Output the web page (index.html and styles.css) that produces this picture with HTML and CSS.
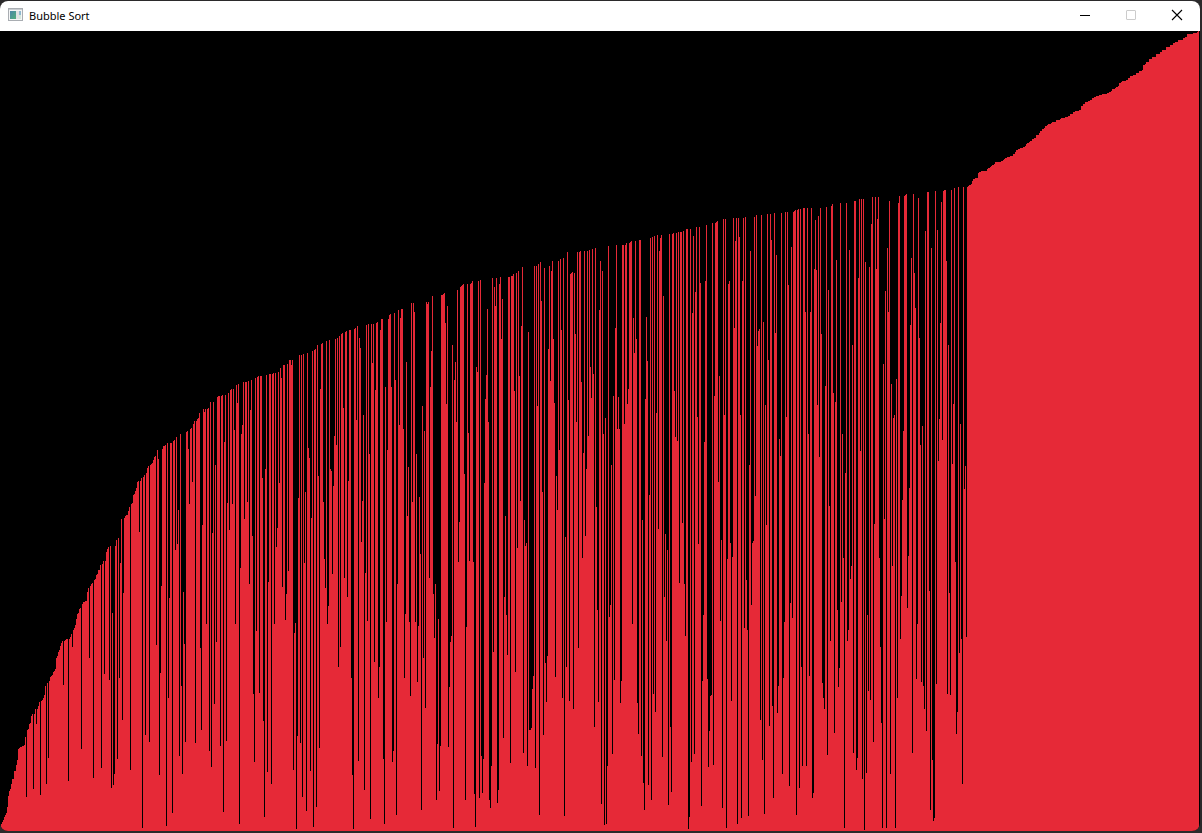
FILE: index.html
```html
<!DOCTYPE html>
<html lang="en">
<head>
<meta charset="utf-8">
<title>Bubble Sort</title>
<link rel="stylesheet" href="styles.css">
</head>
<body>
<main class="window">
  <header class="titlebar">
    <svg class="app-icon" viewBox="0 0 16 16" aria-hidden="true">
      <defs>
        <linearGradient id="pane" x1="0" y1="0" x2="1" y2="1">
          <stop offset="0" stop-color="#4a86a8"/>
          <stop offset="1" stop-color="#4fae7c"/>
        </linearGradient>
      </defs>
      <rect x="0.5" y="0.5" width="14" height="12" fill="#f4f5f6" stroke="#a9adb2"/>
      <path d="M1 1.5H14" stroke="#c9cdd1"/>
      <rect x="2" y="3" width="6" height="8" fill="url(#pane)"/>
      <rect x="8" y="3" width="3" height="8" fill="#dfe2e4"/>
      <rect x="11" y="3" width="2" height="4" fill="#8fb8cf"/>
      <rect x="11" y="7" width="2" height="4" fill="#d3e8dc"/>
    </svg>
    <h1 class="title">Bubble Sort</h1>
    <button class="control" type="button" aria-label="Minimize">
      <svg class="glyph" viewBox="0 0 10 10"><path d="M0 5.5H10" stroke="#000"/></svg>
    </button>
    <button class="control" type="button" aria-label="Maximize" disabled>
      <svg class="glyph" viewBox="0 0 10 10"><rect x="0.5" y="0.5" width="9" height="9" rx="0.5" fill="none" stroke="#ccc"/></svg>
    </button>
    <button class="control" type="button" aria-label="Close">
      <svg class="glyph" viewBox="0 0 10 10"><path d="M0 0L10 10M10 0L0 10" stroke="#000" stroke-width="1.1"/></svg>
    </button>
  </header>
  <svg class="chart" viewBox="0 0 1200 800" preserveAspectRatio="none" role="img" aria-label="Bars being sorted">
    <path class="bars" id="bars"/>
  </svg>
</main>
<script src="bars.js"></script>
</body>
</html>
```

FILE: styles.css
```css
* {
  box-sizing: border-box;
}

body {
  margin: 0;
  height: 100vh;
  padding: 1px 2px 2px 0;
  background: #2b2a2b;
}

.window {
  display: flex;
  flex-direction: column;
  height: 100%;
  overflow: hidden;
  border-radius: 8px;
  background: #000;
}

.titlebar {
  display: flex;
  flex: none;
  align-items: center;
  height: 30px;
  padding-left: 8px;
  background: #fff;
}

.app-icon {
  width: 16px;
  height: 16px;
  margin-right: 5px;
}

.title {
  flex: 1;
  margin: 0;
  font: 400 11px/16px "Noto Sans", "Open Sans", sans-serif;
  color: #000;
}

.control {
  display: flex;
  align-items: center;
  justify-content: center;
  width: 46px;
  height: 30px;
  padding: 0 0 2px;
  border: 0;
  background: none;
}

.glyph {
  width: 10px;
  height: 10px;
  overflow: visible;
}

.chart {
  flex: 1;
  display: block;
  width: 100%;
  min-height: 0;
}

.bars {
  fill: #e62937;
  shape-rendering: crispEdges;
}
```

FILE: bars.js
```js
// Each run lists the tops of consecutive one-unit bars, ten to a row.
// A top is offset + value / scale, measured down from the chart's upper edge.
const runs = [
  { offset: 349, scale: 3, tops: [
    1350,1333,1327,1320,1311,1305,1299,1281,1248,1233,
    1227,1212,1197,1197,1173,1173,1155,1140,1107,1104,
    1101,1101,1098,1098,1095,1071,1251,1050,1047,1032,
    1029,1008,1002,1227,1002,987,1032,987,978,966,
    1245,963,960,954,945,918,1212,909,1134,903,
    891,888,885,876,873,867,834,828,816,810,
    798,789,783,915,783,780,777,777,1203,777,
    771,762,801,750,744,735,717,702,699,687,
    684,1107,672,666,666,663,663,636,624,834,
    618,612,609,1194,600,597,585,582,570,570,
    555,1164,552,543,882,543,516,507,501,900,
    498,1224,699,1215,1182,498,480,1137,474,894,
    549,417,1020,639,414,408,405,405,393,381,
    1170,372,369,345,342,333,324,306,303,456,
    303,294,1344,291,285,1065,279,264,258,1086,
    255,252,249,240,231,228,795,210,237,1185,
    879,618,207,198,198,195,1338,189,954,654,
    189,189,1299,183,180,510,171,492,390,1128,
    162,918,1182,636,792,1086,156,153,207,372,
    147,144,306,132,123,1089,123,117,114,99,
    804,1050,435,87,96,87,732,87,84,1113,
    66,1161,459,66,972,255,786,51,48,48,
    1098,48,45,1296,186,45,1083,369,39,450,
    30,27,372,27,150,732,15,69,12,1332
  ] },
  { offset: 299, scale: 3, tops: [
    714,312,285,156,567,156,156,516,153,762,
    240,150,618,1092,1296,144,903,141,138,1089,
    138,138,444,1173,1461,417,135,1326,756,132,
    132,1362,132,129,882,129,651,594,126,459,
    114,144,771,105,105,870,792,102,723,90,
    90,105,90,1320,909,879,1497,1218,504,75,
    1239,75,1401,72,699,486,1443,69,354,384,
    1323,564,63,1491,60,57,1431,45,438,1254,
    177,42,39,516,687,774,33,882,828,30,
    417,423,732,468,318,27,345,24,1011,18,
    951,12,9,234,744,6,3,801,453,0,
    0,1044,1335,1497,-3,-6,270,-12,1293,24,
    54,636,513,255,1380,729,-15,873,-18,372,
    1467,-18,99,-18,996,180,-21,-24,1104,1011,
    0,-33,-33,1287,1482,171,876,360,-33,-45,
    -48,171,1296,1263,-51,150,1455,762,-60,285,
    -36,-63,-63,297,1044,852,96,558,411,876,
    1098,-81,516,-81,-54,876,372,1056,888,501,
    672,1440,228,984,303,1134,-84,-78,-84,744,
    171,63,-102,792,924,762,1410,1242,867,1383,
    1248,-105,-105,-108,-111,-21,222,-72,1251,1071,
    936,918,45,1494,150,96,276,-120,696,576,
    -129,-132,-135,-138,432,1410,891,-138,309,693,
    -138,-141,-147,696,1392,1491,111,126,-147,1404
  ] },
  { offset: 199, scale: 2.6, tops: [
    130,1368,1464,1376,658,439,377,205,499,1482,
    1503,1394,125,1097,148,198,125,1490,1456,140,
    122,283,179,1321,954,744,1001,1105,122,122,
    1386,120,120,114,419,1149,112,827,107,380,
    705,250,96,1360,754,822,814,1394,265,1300,
    1300,1295,1194,1160,94,1399,94,458,88,1521,
    83,185,681,1313,99,1126,1227,1108,309,94,
    393,107,81,283,450,1162,640,728,81,572,
    75,260,1217,73,1524,798,1136,57,442,1225,
    114,112,109,1246,112,270,499,57,1087,57,
    55,395,853,580,55,796,621,55,536,52,
    356,437,49,374,1292,47,720,988,1227,208,
    81,1493,107,530,1547,489,1545,1394,42,1006,
    975,611,1363,432,1170,255,39,517,434,517,
    1230,1173,39,39,504,39,34,452,413,34,
    31,29,1025,229,320,29,283,1230,1311,26,
    26,1368,754,1438,1508,439,226,341,1443,689,
    21,1482,18,1207,16,1253,476,13,777,55,
    21,13,1370,172,954,791,1069,832,1495,10,
    1292,1461,10,8,419,538,8,549,5,918,
    5,5,762,3,921,1056,-3,-3,1558,1526,
    -3,1383,216,16,1363,161,-8,486,817,-8,
    138,1498,1173,1001,551,133,-13,1168,1396,1303,
    1212,1209,-18,1391,432,-18,-21,-23,655,380
  ] },
  { offset: 149, scale: 2.4, tops: [
    1059,864,1508,94,564,94,1554,910,250,243,
    872,1251,905,91,355,146,91,1546,91,137,
    564,1532,243,91,1076,89,960,1081,1527,684,
    170,1021,872,867,89,759,84,399,363,358,
    1297,84,1393,341,1522,540,828,82,432,1311,
    82,144,1263,1484,79,367,180,1280,1215,622,
    663,79,1426,1196,1061,77,569,77,252,1455,
    1016,161,1052,77,74,72,1525,72,70,1458,
    70,1169,1407,67,67,317,1407,67,610,1191,
    317,67,1484,1470,214,96,216,540,86,665,
    67,370,1208,1244,1270,495,65,1381,264,783,
    1107,62,58,511,1328,533,192,1033,1217,1172,
    55,1013,610,908,1556,704,55,1107,1081,168,
    958,927,396,1374,50,50,1417,1388,235,46,
    651,46,1438,46,1561,197,1422,1045,1227,209,
    1249,106,41,1349,826,41,214,94,41,908,
    1121,1304,1554,442,814,267,1554,163,317,50,
    1426,490,927,571,564,1556,478,1244,55,38,
    1102,999,768,603,38,36,34,1028,903,740,
    348,187,1374,34,223,307,1198,1066,43,379,
    636,1205,591,1215,1270,122,1323,29,29,987,
    1513,163,1393,1539,1532,26,1210,120,675,574,
    343,53,624,26,24,24,194,1234,396,992,
    1237,24,682,538,19,917,1330,1277,17,1136,
    586,1102,1450,17,742,687,1097
  ] }
];

// Bars already in order: [first column, top * 3]; each level lasts until the next.
const sorted = [
  [967,471],[968,468],[969,465],[971,462],[972,453],[973,447],[975,444],[978,429],
  [979,426],[981,423],[987,417],[988,414],[990,411],[991,408],[992,405],[994,402],
  [995,396],[1001,393],[1003,390],[1004,387],[1005,384],[1007,381],[1010,378],[1013,372],
  [1015,366],[1016,360],[1018,357],[1020,354],[1023,351],[1025,348],[1026,342],[1027,339],
  [1029,336],[1030,333],[1032,327],[1034,324],[1036,315],[1039,309],[1040,303],[1042,297],
  [1044,294],[1045,288],[1047,285],[1048,282],[1051,279],[1052,276],[1056,270],[1060,267],
  [1061,264],[1065,261],[1068,258],[1070,252],[1073,246],[1075,243],[1079,240],[1081,229],
  [1083,222],[1085,216],[1088,213],[1090,210],[1092,204],[1094,201],[1096,198],[1099,195],
  [1102,192],[1107,189],[1109,186],[1111,183],[1112,178],[1115,175],[1116,170],[1118,167],
  [1119,160],[1121,156],[1122,153],[1126,150],[1128,144],[1130,138],[1133,135],[1136,130],
  [1139,123],[1142,120],[1143,106],[1145,101],[1146,95],[1149,87],[1152,81],[1156,73],
  [1160,67],[1162,60],[1166,52],[1170,46],[1173,40],[1175,36],[1178,30],[1183,24],
  [1185,20],[1187,12],[1193,9],[1197,5],[1198,3]
];
const end = 1199;

const tops = runs.flatMap(run => run.tops.map(v => Math.round(run.offset + v / run.scale)));
sorted.forEach(([first, level], i) => {
  const next = i + 1 < sorted.length ? sorted[i + 1][0] : end;
  for (let x = first; x < next; x++) tops.push(Math.round(level / 3) - 1);
});

document.getElementById("bars").setAttribute(
  "d", tops.map((top, x) => `M${x} ${top}h1V800h-1z`).join("")
);
```
